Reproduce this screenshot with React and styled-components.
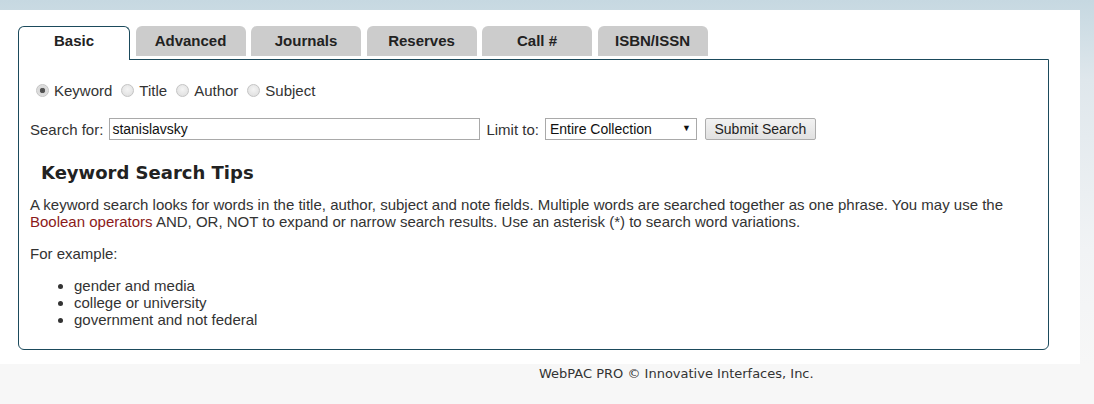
import React, { useState } from 'react';
import styled, { createGlobalStyle } from 'styled-components';

const GlobalStyle = createGlobalStyle`
  html, body {
    margin: 0;
    padding: 0;
  }
  body {
    width: 1094px;
    height: 404px;
    overflow: hidden;
    background: linear-gradient(to bottom, #c6d8e1 0px, #dfe7ec 80px, #f1f3f5 250px, #f7f7f7 364px, #f7f7f7 404px);
    font-family: "Liberation Sans", Arial, sans-serif;
    color: #333;
  }
`;

// layout
const Page = styled.div`
  padding-top: 10px;
`;

const Sheet = styled.div`
  width: 1080px;
  height: 354px;
  box-sizing: border-box;
  background: #fff;
  padding: 16px 0 0 18px;
`;

const TabBar = styled.ul`
  list-style: none;
  margin: 0 0 -1px 0;
  padding: 0;
  display: flex;
  align-items: flex-start;
  gap: 5.5px;
  position: relative;
  z-index: 1;
`;

const Tab = styled.li`
  width: 110px;
  box-sizing: border-box;
  height: ${p => (p.$active ? '34px' : '30px')};
  text-align: center;
  font-weight: bold;
  font-size: 15px;
  line-height: 30px;
  color: #222;
  cursor: pointer;
  border-radius: 6px 6px 0 0;
  background: ${p => (p.$active ? '#fff' : '#cccccc')};
  border: ${p => (p.$active ? '1px solid #1b4a5c' : 'none')};
  border-bottom: none;
  ${p => p.$active && 'width: 112px; line-height: 28px;'}
`;

const Panel = styled.div`
  width: 1031px;
  height: 291px;
  box-sizing: border-box;
  border: 1px solid #1b4a5c;
  border-radius: 0 0 6px 6px;
  padding: 22px 11px 0 11px;
  font-size: 15px;
`;

const RadioRow = styled.div`
  display: flex;
  align-items: center;
  height: 17px;
`;

const RadioLabel = styled.label`
  display: flex;
  align-items: center;
  margin-right: 3px;
  color: #333;
  cursor: pointer;
`;

const Radio = styled.input.attrs({ type: 'radio' })`
  appearance: none;
  width: 13px;
  height: 13px;
  margin: 0 5px 0 6px;
  border-radius: 50%;
  border: 1px solid #c4c4c4;
  box-sizing: border-box;
  background: radial-gradient(circle at 50% 40%, #f4f4f4 0%, #dcdcdc 100%);
  &:checked {
    background: radial-gradient(circle, #4a4a4a 0, #5a5a5a 2.5px, #d8d8d8 3px, #e6e6e6 100%);
  }
`;

const SearchRow = styled.div`
  display: flex;
  align-items: center;
  margin-top: 19px;
  height: 22px;
  font-size: 15px;
`;

const Label = styled.span`
  margin-right: 6px;
`;

const TextInput = styled.input`
  width: 371px;
  height: 22px;
  box-sizing: border-box;
  border: 1px solid #a9a9a9;
  padding: 0 2px;
  font-family: "Liberation Sans", Arial, sans-serif;
  font-size: 14px;
  color: #111;
  margin-right: 6px;
  outline: none;
`;

const SelectWrap = styled.span`
  position: relative;
  display: inline-block;
  margin-right: 8px;
`;

const Select = styled.select`
  appearance: none;
  width: 152px;
  height: 22px;
  box-sizing: border-box;
  border: 1px solid #a9a9a9;
  border-radius: 0;
  background: #fff;
  padding: 0 0 0 4px;
  font-family: "Liberation Sans", Arial, sans-serif;
  font-size: 14px;
  color: #111;
  outline: none;
`;

const Caret = styled.span`
  position: absolute;
  right: 6px;
  top: 5px;
  font-size: 9px;
  color: #111;
  pointer-events: none;
`;

const Button = styled.button`
  width: 111px;
  height: 22px;
  box-sizing: border-box;
  border: 1px solid #adadad;
  border-radius: 2px;
  background: linear-gradient(to bottom, #f2f2f2, #e1e1e1);
  font-family: "Liberation Sans", Arial, sans-serif;
  font-size: 14px;
  color: #222;
  padding: 0;
`;

const TipsTitle = styled.h2`
  font-family: "DejaVu Sans", Verdana, sans-serif;
  font-weight: bold;
  font-size: 18px;
  color: #222;
  margin: 22px 0 0 11px;
  line-height: 22px;
`;

const Text = styled.p`
  margin: ${p => p.$top || '12px'} 0 0 0;
  line-height: 17px;
  color: #333;
`;

const Link = styled.a`
  color: #8b1a1a;
  text-decoration: none;
`;

const Examples = styled.ul`
  margin: 15px 0 0 0;
  padding-left: 44px;
  line-height: 17px;
  color: #333;
`;

const Footer = styled.div`
  padding-left: 539px;
  margin-top: 1px;
  font-family: "DejaVu Sans", Tahoma, sans-serif;
  font-size: 13px;
  color: #333;
  line-height: 18px;
`;

const tabs = ['Basic', 'Advanced', 'Journals', 'Reserves', 'Call #', 'ISBN/ISSN'];
const kinds = ['Keyword', 'Title', 'Author', 'Subject'];

export default function App() {
  const [kind, setKind] = useState('Keyword');
  const [term, setTerm] = useState('stanislavsky');

  return (
    <>
      <GlobalStyle />
      <Page>
        <Sheet>
          <TabBar>
            {tabs.map(t => (
              <Tab key={t} $active={t === 'Basic'}>{t}</Tab>
            ))}
          </TabBar>
          <Panel>
            <RadioRow>
              {kinds.map(k => (
                <RadioLabel key={k}>
                  <Radio name="kind" checked={kind === k} onChange={() => setKind(k)} />
                  {k}
                </RadioLabel>
              ))}
            </RadioRow>
            <SearchRow>
              <Label>Search for:</Label>
              <TextInput value={term} onChange={e => setTerm(e.target.value)} />
              <Label>Limit to:</Label>
              <SelectWrap>
                <Select defaultValue="all">
                  <option value="all">Entire Collection</option>
                </Select>
                <Caret>▼</Caret>
              </SelectWrap>
              <Button>Submit Search</Button>
            </SearchRow>
            <TipsTitle>Keyword Search Tips</TipsTitle>
            <Text>
              A keyword search looks for words in the title, author, subject and note fields. Multiple words are searched together as one phrase. You may use the{' '}
              <Link href="#">Boolean operators</Link> AND, OR, NOT to expand or narrow search results. Use an asterisk (*) to search word variations.
            </Text>
            <Text $top="15px">For example:</Text>
            <Examples>
              <li>gender and media</li>
              <li>college or university</li>
              <li>government and not federal</li>
            </Examples>
          </Panel>
        </Sheet>
        <Footer>WebPAC PRO © Innovative Interfaces, Inc.</Footer>
      </Page>
    </>
  );
}
